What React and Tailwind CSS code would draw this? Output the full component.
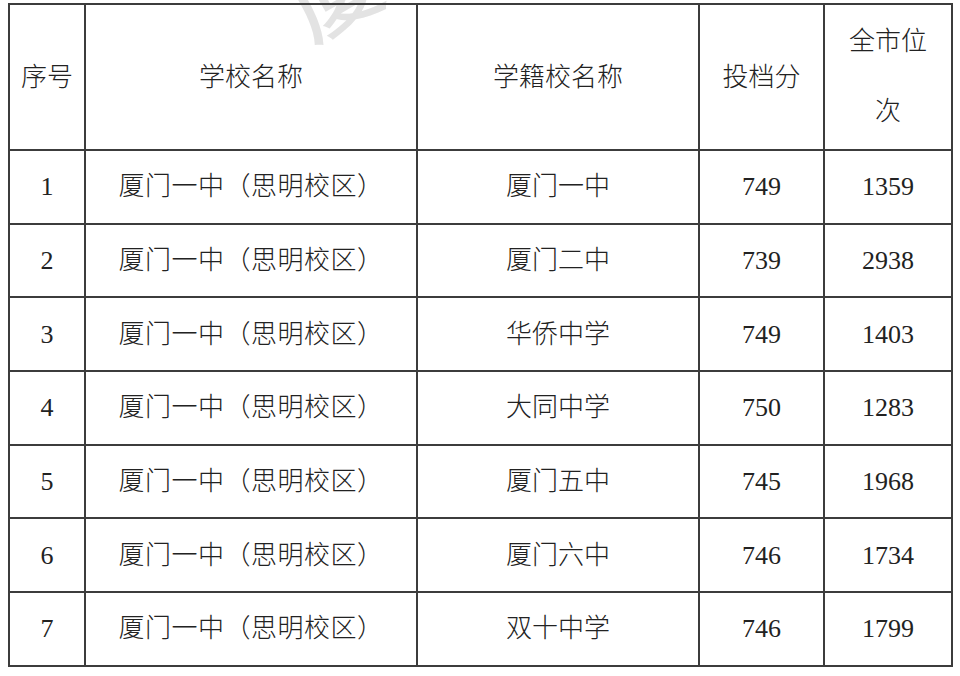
import React from 'react';

const rows = [
  { no: 1, school: '厦门一中（思明校区）', origin: '厦门一中', score: 749, rank: 1359 },
  { no: 2, school: '厦门一中（思明校区）', origin: '厦门二中', score: 739, rank: 2938 },
  { no: 3, school: '厦门一中（思明校区）', origin: '华侨中学', score: 749, rank: 1403 },
  { no: 4, school: '厦门一中（思明校区）', origin: '大同中学', score: 750, rank: 1283 },
  { no: 5, school: '厦门一中（思明校区）', origin: '厦门五中', score: 745, rank: 1968 },
  { no: 6, school: '厦门一中（思明校区）', origin: '厦门六中', score: 746, rank: 1734 },
  { no: 7, school: '厦门一中（思明校区）', origin: '双十中学', score: 746, rank: 1799 },
];

const cell = 'border-2 border-[#3c3c3c] text-center align-middle p-0';

const App = () => {
  return (
    <div
      className="relative w-[960px] h-[676px] bg-white overflow-hidden text-[#222] text-[26px] font-light"
      style={{ fontFamily: '"Liberation Serif", "Noto Sans CJK SC", serif' }}
    >
      {/* 水印 */}
      <span className="absolute left-[290px] top-[-50px] leading-none text-[90px] font-medium text-[#e3e3e3] -rotate-[30deg] select-none">
        厦
      </span>

      <div className="relative pt-[3px] pl-[8px]">
        <table className="border-collapse table-fixed w-[943px]">
          <colgroup>
            <col className="w-[76px]" />
            <col className="w-[332px]" />
            <col className="w-[282px]" />
            <col className="w-[125px]" />
            <col className="w-[128px]" />
          </colgroup>
          <thead>
            <tr className="h-[146px]">
              <th className={`${cell} font-light`}>序号</th>
              <th className={`${cell} font-light`}>学校名称</th>
              <th className={`${cell} font-light`}>学籍校名称</th>
              <th className={`${cell} font-light`}>投档分</th>
              <th className={`${cell} font-light leading-[70px]`}>
                全市位
                <br />
                次
              </th>
            </tr>
          </thead>
          <tbody>
            {rows.map((r) => (
              <tr key={r.no} className="h-[73.7px]">
                <td className={cell}>{r.no}</td>
                <td className={`${cell} tracking-[0.5px]`}>{r.school}</td>
                <td className={cell}>{r.origin}</td>
                <td className={cell}>{r.score}</td>
                <td className={cell}>{r.rank}</td>
              </tr>
            ))}
          </tbody>
        </table>
      </div>
    </div>
  );
};

export default App;
